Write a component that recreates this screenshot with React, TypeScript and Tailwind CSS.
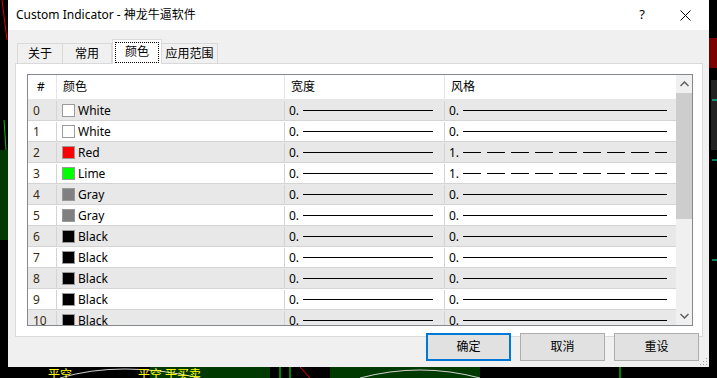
const font = {
  fontFamily: '"Segoe UI", "Noto Sans", "Noto Sans CJK SC", sans-serif',
};

const rows = [
  { id: 0, color: "#ffffff", name: "White", style: "0." },
  { id: 1, color: "#ffffff", name: "White", style: "0." },
  { id: 2, color: "#ff0000", name: "Red", style: "1." },
  { id: 3, color: "#00ff00", name: "Lime", style: "1." },
  { id: 4, color: "#808080", name: "Gray", style: "0." },
  { id: 5, color: "#808080", name: "Gray", style: "0." },
  { id: 6, color: "#000000", name: "Black", style: "0." },
  { id: 7, color: "#000000", name: "Black", style: "0." },
  { id: 8, color: "#000000", name: "Black", style: "0." },
  { id: 9, color: "#000000", name: "Black", style: "0." },
  { id: 10, color: "#000000", name: "Black", style: "0." },
];

const Line = ({ dashed }: { dashed?: boolean }) => (
  <svg className="flex-1 h-[3px]" preserveAspectRatio="none">
    <line
      x1="0"
      y1="1.5"
      x2="100%"
      y2="1.5"
      stroke="#000"
      strokeWidth="1"
      strokeDasharray={dashed ? "18 6" : undefined}
    />
  </svg>
);

// chart behind the dialog
const Backdrop = () => (
  <svg className="absolute inset-0" width="717" height="378">
    <line x1="2" y1="0" x2="7" y2="40" stroke="#e00000" strokeWidth="1" />
    <line x1="4" y1="120" x2="8" y2="180" stroke="#00c000" strokeWidth="1" />
    <rect x="0" y="150" width="8" height="90" fill="#003800" />
    <rect x="709" y="38" width="8" height="30" fill="#7a0000" />
    <rect x="711" y="80" width="6" height="70" fill="#222" />
    <line x1="712" y1="100" x2="717" y2="100" stroke="#00ffc0" />
    <line x1="712" y1="160" x2="717" y2="160" stroke="#00ffc0" />
    <line x1="712" y1="260" x2="717" y2="260" stroke="#00ffc0" />
    <rect x="150" y="367" width="120" height="11" fill="#003a00" />
    <rect x="330" y="367" width="150" height="11" fill="#003a00" />
    <path d="M60 378 Q120 360 200 378" stroke="#cfcfcf" fill="none" />
    <path d="M360 378 Q420 362 480 378" stroke="#cfcfcf" fill="none" />
    <line x1="280" y1="367" x2="280" y2="378" stroke="#00ff00" />
    <line x1="290" y1="367" x2="290" y2="378" stroke="#00ff00" />
    <line x1="300" y1="367" x2="310" y2="378" stroke="#ff0000" />
    <line x1="620" y1="367" x2="620" y2="378" stroke="#00ff00" />
  </svg>
);

export default function App() {
  return (
    <div
      className="relative w-[717px] h-[378px] overflow-hidden bg-black text-[12px] text-black"
      style={font}
    >
      <Backdrop />
      <div className="absolute left-[138px] top-[369px] text-[12px] leading-none text-[#ffff00]">
        平空 平买卖
      </div>
      <div className="absolute left-[48px] top-[369px] text-[12px] leading-none text-[#ffff00]">
        平空
      </div>

      {/* dialog window */}
      <div className="absolute left-[8px] top-0 w-[701px] h-[367px] bg-[#f0f0f0] flex flex-col">
        {/* title bar */}
        <div className="h-[30px] bg-white flex items-center pl-[8px] shrink-0">
          <span className="flex-1">Custom Indicator - 神龙牛逼软件</span>
          <span className="w-[20px] text-center text-[13px] mr-[28px]">?</span>
          <svg width="11" height="11" className="mr-[18px]" viewBox="0 0 11 11">
            <path d="M0.5 0.5 L10.5 10.5 M10.5 0.5 L0.5 10.5" stroke="#000" strokeWidth="1" />
          </svg>
        </div>

        {/* tabs */}
        <div className="flex items-end h-[25px] mt-[9px] ml-[9px] -mb-px relative z-10">
          <div className="w-[46px] h-[21px] flex items-center justify-center border border-b-0 border-[#d9d9d9]">
            关于
          </div>
          <div className="w-[49px] h-[21px] flex items-center justify-center border border-l-0 border-b-0 border-[#d9d9d9]">
            常用
          </div>
          <div className="w-[50px] h-[25px] flex items-center justify-center bg-white border border-b-0 border-[#d9d9d9]">
            <span className="border border-dotted border-black px-[9px] h-[21px] flex items-center">
              颜色
            </span>
          </div>
          <div className="w-[56px] h-[21px] flex items-center justify-center border border-l-0 border-b-0 border-[#d9d9d9]">
            应用范围
          </div>
        </div>

        {/* tab panel */}
        <div className="ml-[7px] w-[688px] h-[274px] bg-white border border-[#d9d9d9] pl-[11px] pt-[10px] shrink-0">
          <div className="w-[666px] h-[252px] border border-[#828790] flex overflow-hidden">
            <div className="w-[648px] flex flex-col">
              {/* header */}
              <div className="h-[25px] flex shrink-0 border-b border-[#e5e5e5]">
                <div className="w-[29px] pl-[9px] flex items-center border-r border-[#e5e5e5]">#</div>
                <div className="w-[228px] pl-[6px] flex items-center border-r border-[#e5e5e5]">颜色</div>
                <div className="w-[160px] pl-[6px] flex items-center border-r border-[#e5e5e5]">宽度</div>
                <div className="w-[231px] pl-[6px] flex items-center">风格</div>
              </div>
              {rows.map((r) => (
                <div
                  key={r.id}
                  className={`h-[21px] flex shrink-0 border-b border-[#d4d4d4] pt-px ${
                    r.id % 2 === 0 ? "bg-[#e8e8e8]" : "bg-white"
                  }`}
                >
                  <div className="w-[29px] pl-[5px] flex items-center border-r border-[#d4d4d4] text-[#3a2a10]">
                    {r.id}
                  </div>
                  <div className="w-[228px] pl-[5px] flex items-center gap-[3px] border-r border-[#d4d4d4]">
                    <span
                      className="w-[13px] h-[13px] shrink-0 border border-[#9a9a9a]"
                      style={{ backgroundColor: r.color }}
                    />
                    <span>{r.name}</span>
                  </div>
                  <div className="w-[160px] pl-[4px] pr-[11px] flex items-center border-r border-[#d4d4d4]">
                    <span className="w-[9px]">0.</span>
                    <span className="w-[5px]" />
                    <Line />
                  </div>
                  <div className="w-[231px] pl-[4px] pr-[9px] flex items-center">
                    <span className="w-[9px]">{r.style}</span>
                    <span className="w-[5px]" />
                    <Line dashed={r.style === "1."} />
                  </div>
                </div>
              ))}
            </div>

            {/* scrollbar */}
            <div className="w-[16px] bg-[#f0f0f0] flex flex-col">
              <div className="h-[18px] flex items-center justify-center shrink-0">
                <svg width="9" height="6" viewBox="0 0 9 6">
                  <path d="M0.5 5 L4.5 1 L8.5 5" stroke="#606060" strokeWidth="1.5" fill="none" />
                </svg>
              </div>
              <div className="h-[126px] bg-[#cdcdcd] shrink-0" />
              <div className="flex-1" />
              <div className="h-[18px] flex items-center justify-center shrink-0">
                <svg width="9" height="6" viewBox="0 0 9 6">
                  <path d="M0.5 1 L4.5 5 L8.5 1" stroke="#606060" strokeWidth="1.5" fill="none" />
                </svg>
              </div>
            </div>
          </div>
        </div>

        {/* buttons */}
        <div className="flex justify-end gap-[9px] pr-[10px] -mt-[4px]">
          <button className="w-[85px] h-[28px] bg-[#e1e1e1] border-2 border-[#0078d7]">确定</button>
          <button className="w-[85px] h-[28px] bg-[#e1e1e1] border border-[#adadad]">取消</button>
          <button className="w-[85px] h-[28px] bg-[#e1e1e1] border border-[#adadad]">重设</button>
        </div>

        {/* size grip */}
        <svg className="absolute right-[1px] bottom-[1px]" width="10" height="10" viewBox="0 0 10 10">
          <rect x="8" y="2" width="1" height="1" fill="#a0a0a0" />
          <rect x="5" y="5" width="1" height="1" fill="#a0a0a0" />
          <rect x="8" y="5" width="1" height="1" fill="#a0a0a0" />
          <rect x="2" y="8" width="1" height="1" fill="#a0a0a0" />
          <rect x="5" y="8" width="1" height="1" fill="#a0a0a0" />
          <rect x="8" y="8" width="1" height="1" fill="#a0a0a0" />
        </svg>
      </div>
    </div>
  );
}
